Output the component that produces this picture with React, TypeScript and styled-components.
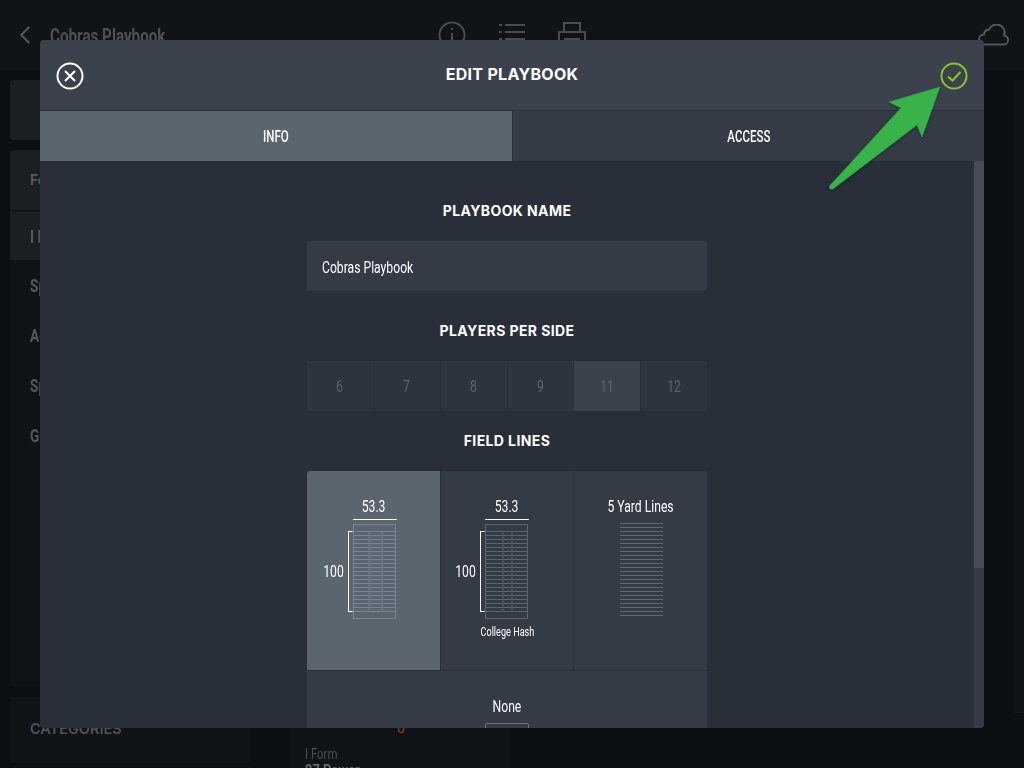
import React from "react";
import styled, { createGlobalStyle } from "styled-components";
import { ChevronLeft } from "lucide-react";

const GlobalStyle = createGlobalStyle`
    html, body {
        margin: 0;
        padding: 0;
        background: #0c0f12;
        overflow: hidden;
    }
    body {
        font-family: "Roboto", "Liberation Sans", sans-serif;
    }
`;

const playerCounts = [6, 7, 8, 9, 11, 12];
const sideRows = ["Spread", "Ace", "Split", "Gun"];

const FieldDiagram: React.FC<{ hashLeft: number; hashRight: number; stroke: string }> = ({ hashLeft, hashRight, stroke }) => {
    const lines = Array.from({ length: 21 }, (_, i) => 7 + i * 4);
    return (
        <svg width="44" height="96" viewBox="0 0 44 96">
            <rect x="0.5" y="0.5" width="42" height="94" fill="none" stroke={stroke} />
            {lines.map((y) => (
                <line key={y} x1="0" x2="43" y1={y + 0.5} y2={y + 0.5} stroke={stroke} />
            ))}
            {lines.slice(0, 20).map((y) => (
                <g key={y}>
                    <line x1={hashLeft} x2={hashLeft + 2} y1={y + 2.5} y2={y + 2.5} stroke={stroke} />
                    <line x1={hashRight} x2={hashRight + 2} y1={y + 2.5} y2={y + 2.5} stroke={stroke} />
                </g>
            ))}
        </svg>
    );
};

const FieldCell: React.FC<{ active?: boolean; college?: boolean }> = ({ active, college }) => (
    <FieldOption $active={active}>
        <WidthLabel><Squeeze>53.3</Squeeze></WidthLabel>
        <WidthRule $shift={active} />
        <Diagram $shift={active}>
            <LengthLabel><Squeeze>100</Squeeze></LengthLabel>
            <Bracket />
            <FieldDiagram
                hashLeft={college ? 17 : 15}
                hashRight={college ? 26 : 28}
                stroke={active ? "#7b8490" : "#5d646e"}
            />
        </Diagram>
        {college && <Caption><Squeeze>College Hash</Squeeze></Caption>}
    </FieldOption>
);

export default function App() {
    return (
        <Page>
            <GlobalStyle />
            <TopBar>
                <BackButton><ChevronLeft size={30} strokeWidth={1.6} /></BackButton>
                <PageTitle><Squeeze $left>Cobras Playbook</Squeeze></PageTitle>
                <TopIcons>
                    <svg width="28" height="28" viewBox="0 0 28 28" fill="none" stroke="#4a4c4e" strokeWidth="2">
                        <circle cx="14" cy="14" r="12.500" />
                        <path d="M14 12v9M14 7v2" />
                    </svg>
                    <svg width="28" height="28" viewBox="0 0 28 28" fill="none" stroke="#4a4c4e" strokeWidth="2">
                        <path d="M1 4h3M7 4h20M1 11h3M7 11h20M1 18h3M7 18h20" />
                    </svg>
                    <svg width="28" height="28" viewBox="0 0 28 28" fill="none" stroke="#4a4c4e" strokeWidth="2">
                        <path d="M6 11V2h16v9M1 26V11h26v15zM6 18h16" />
                    </svg>
                </TopIcons>
                <svg width="32" height="22" viewBox="0 0 32 22" fill="none" stroke="#55575a" strokeWidth="2">
                    <path d="M7 20.500h19a4.500 4.500 0 0 0 1-9 8 8 0 0 0-15-6 5.500 5.500 0 0 0-5 5 5 5 0 0 0 0 10z" />
                </svg>
            </TopBar>
            <Body>
                <Sidebar>
                    <SearchCard />
                    <FormationCard>
                        <FormationHead>Formations</FormationHead>
                        <FormationRow $active><Squeeze $left>I Form</Squeeze></FormationRow>
                        {sideRows.map((row) => (
                            <FormationRow key={row}><Squeeze $left>{row}</Squeeze></FormationRow>
                        ))}
                    </FormationCard>
                    <CategoriesCard>CATEGORIES</CategoriesCard>
                </Sidebar>
                <PlayColumn>
                    <PlayCard>
                        <PlayCount>0</PlayCount>
                        <PlayForm><Squeeze $left>I Form</Squeeze></PlayForm>
                        <PlayName><Squeeze $left>27 Power</Squeeze></PlayName>
                    </PlayCard>
                </PlayColumn>
                <RightRail />
            </Body>

            <Modal>
                <ModalHeader>
                    <svg width="28" height="28" viewBox="0 0 28 28" fill="none" stroke="#fff">
                        <circle cx="14" cy="14" r="12.500" strokeWidth="2" />
                        <path d="M9 9l10 10M19 9L9 19" strokeWidth="2" />
                    </svg>
                    <ModalTitle>EDIT PLAYBOOK</ModalTitle>
                    <svg width="28" height="28" viewBox="0 0 28 28" fill="none" stroke="#84c828">
                        <circle cx="14" cy="14" r="12.500" strokeWidth="2" />
                        <path d="M8 14.500l4.500 4 8-8.500" strokeWidth="2" />
                    </svg>
                </ModalHeader>
                <Tabs>
                    <Tab $active><Squeeze $x={0.72}>INFO</Squeeze></Tab>
                    <Tab><Squeeze $x={0.72}>ACCESS</Squeeze></Tab>
                </Tabs>
                <ModalBody>
                    <Form>
                        <SectionTitle>PLAYBOOK NAME</SectionTitle>
                        <NameField><Squeeze $left>Cobras Playbook</Squeeze></NameField>
                        <SectionTitle>PLAYERS PER SIDE</SectionTitle>
                        <Players>
                            {playerCounts.map((n) => (
                                <Player key={n} $active={n === 11}><Squeeze>{n}</Squeeze></Player>
                            ))}
                        </Players>
                        <SectionTitle>FIELD LINES</SectionTitle>
                        <FieldGrid>
                            <FieldCell active />
                            <FieldCell college />
                            <FieldOption>
                                <YardLabel><Squeeze>5 Yard Lines</Squeeze></YardLabel>
                                <svg width="44" height="96" viewBox="0 0 44 96" stroke="#636a74">
                                    {Array.from({ length: 24 }, (_, i) => (
                                        <line key={i} x1="1" x2="44" y1={2.5 + i * 4} y2={2.5 + i * 4} />
                                    ))}
                                </svg>
                            </FieldOption>
                            <NoneOption>
                                <YardLabel><Squeeze>None</Squeeze></YardLabel>
                                <NoneField />
                            </NoneOption>
                        </FieldGrid>
                    </Form>
                    <ScrollTrack><ScrollThumb /></ScrollTrack>
                </ModalBody>
            </Modal>

            <Arrow width="124" height="112" viewBox="0 0 124 112">
                <path d="M111 0L60 15 72 21 0.500 99Q0 103 4 102L88 38 93 50z" fill="#37b34a" stroke="#37b34a" strokeWidth="0.500" strokeLinejoin="round" />
            </Arrow>
        </Page>
    );
}

const Page = styled.div`
    position: relative;
    width: 1024px;
    height: 768px;
    overflow: hidden;
    background: #0c0f12;
    color: #55575a;
`;

const Squeeze = styled.span<{ $left?: boolean; $x?: number }>`
    display: inline-block;
    white-space: nowrap;
    transform: scaleX(${(p) => p.$x ?? 0.76});
    transform-origin: ${(p) => (p.$left ? "left center" : "center")};
`;

const TopBar = styled.header`
    height: 70px;
    padding: 0 15px 0 10px;
    display: flex;
    align-items: center;
    box-sizing: border-box;
    background: #101417;
    color: #55575a;
`;

const BackButton = styled.div`
    display: flex;
    width: 30px;
    margin-right: 10px;
`;

const PageTitle = styled.div`
    width: 380px;
    padding-top: 2px;
    font-size: 20px;
    font-weight: 700;
    color: #4e5052;
`;

const TopIcons = styled.div`
    display: flex;
    gap: 32px;
    margin: 0 0 0 8px;
    flex: 1;
`;

const Body = styled.div`
    display: flex;
    padding: 10px 0 0 10px;
    gap: 40px;
`;

const Sidebar = styled.aside`
    width: 240px;
    height: 683px;
    flex: none;
    display: flex;
    flex-direction: column;
    gap: 10px;
`;

const SearchCard = styled.div`
    height: 60px;
    background: #1b1f22;
    border-radius: 4px;
`;

const FormationCard = styled.div`
    flex: 1;
    background: #0f1316;
    border-radius: 4px;
    overflow: hidden;
`;

const FormationHead = styled.div`
    height: 60px;
    line-height: 60px;
    padding-left: 20px;
    background: #1b1f22;
    font-family: "Inter", sans-serif;
    font-weight: 700;
    font-size: 14px;
    border-bottom: 1px solid #0c0e10;
    color: #55575a;
`;

const FormationRow = styled.div<{ $active?: boolean }>`
    height: ${(p) => (p.$active ? "49px" : "50px")};
    line-height: 52px;
    padding-left: 20px;
    font-size: 18px;
    font-weight: 700;
    color: #55575a;
    background: ${(p) => (p.$active ? "#1b1f22" : "transparent")};
`;

const CategoriesCard = styled.div`
    height: 66px;
    flex: none;
    line-height: 64px;
    padding-left: 20px;
    background: #101417;
    font-family: "Inter", sans-serif;
    font-weight: 600;
    font-size: 14.500px;
    color: #505254;
`;

const PlayColumn = styled.main`
    flex: 1;
`;

const PlayCard = styled.div`
    width: 220px;
    height: 70px;
    margin-top: 640px;
    padding-left: 15px;
    box-sizing: border-box;
    background: #101417;
`;

const PlayCount = styled.div`
    padding-right: 13px;
    color: #8a4518;
    font-size: 14px;
    text-align: center;
    height: 27px;
`;

const PlayForm = styled.div`
    font-size: 15px;
    line-height: 15px;
    color: #4a4c4e;
`;

const PlayName = styled.div`
    font-size: 17px;
    line-height: 17px;
    font-weight: 700;
    color: #66686a;
`;

const RightRail = styled.div`
    width: 10px;
    height: 633px;
    flex: none;
    background: #101417;
`;

const Modal = styled.div`
    position: absolute;
    left: 40px;
    top: 40px;
    width: 944px;
    height: 688px;
    display: flex;
    flex-direction: column;
    background: #282f38;
    border-radius: 4px;
    overflow: hidden;
`;

const ModalHeader = styled.div`
    height: 71px;
    flex: none;
    padding: 2px 16px 0 16px;
    box-sizing: border-box;
    display: flex;
    align-items: center;
    justify-content: space-between;
    background: #3b424d;
    border-bottom: 1px solid #2a3038;
`;

const ModalTitle = styled.div`
    margin-bottom: 5px;
    color: #fff;
    font-family: "Inter", sans-serif;
    font-size: 16px;
    letter-spacing: 0.3px;
    font-weight: 700;
`;

const Tabs = styled.div`
    display: grid;
    grid-template-columns: 472px 1fr;
    gap: 1px;
    height: 50px;
    flex: none;
    background: #2a3038;
`;

const Tab = styled.div<{ $active?: boolean }>`
    display: flex;
    align-items: center;
    justify-content: center;
    font-size: 16px;
    font-weight: 500;
    color: #fff;
    background: ${(p) => (p.$active ? "#5a6570" : "#343b46")};
`;

const ModalBody = styled.div`
    flex: 1;
    display: flex;
    min-height: 0;
`;

const Form = styled.div`
    flex: 1;
    display: flex;
    flex-direction: column;
    align-items: center;
    padding: 40px 0 0 0;
    overflow: hidden;
`;

const SectionTitle = styled.h2`
    margin: 0;
    height: 20px;
    flex: none;
    line-height: 20px;
    color: #fff;
    font-family: "Inter", sans-serif;
    font-size: 14px;
    letter-spacing: 0.4px;
    font-weight: 700;
`;

const NameField = styled.div`
    width: 400px;
    height: 50px;
    flex: none;
    margin: 20px 0 30px;
    padding-left: 15px;
    box-sizing: border-box;
    line-height: 53px;
    font-size: 16px;
    color: #fff;
    background: #343b46;
    border-radius: 3px;
`;

const Players = styled.div`
    width: 400px;
    height: 50px;
    flex: none;
    margin: 20px 0;
    display: grid;
    grid-template-columns: repeat(6, 1fr);
    gap: 1px;
`;

const Player = styled.div<{ $active?: boolean }>`
    display: flex;
    align-items: center;
    justify-content: center;
    font-size: 16px;
    color: #5e646d;
    background: ${(p) => (p.$active ? "#3b424d" : "#2d343d")};
`;

const FieldGrid = styled.div`
    width: 400px;
    margin-top: 20px;
    display: grid;
    grid-template-columns: repeat(3, 1fr);
    gap: 1px;
    border-radius: 3px;
    overflow: hidden;
    background: #282f38;
    flex: none;
`;

const FieldOption = styled.div<{ $active?: boolean }>`
    height: 199px;
    padding-top: 27px;
    box-sizing: border-box;
    display: flex;
    flex-direction: column;
    align-items: center;
    background: ${(p) => (p.$active ? "#5a6570" : "#343b46")};
`;

const WidthLabel = styled.div`
    font-size: 16px;
    color: #fff;
    line-height: 18px;
`;

const WidthRule = styled.div<{ $shift?: boolean }>`
    width: 44px;
    height: 1px;
    margin-top: 3px;
    margin-left: ${(p) => (p.$shift ? "4px" : "0")};
    background: #fff;
`;

const Diagram = styled.div<{ $shift?: boolean }>`
    position: relative;
    margin-top: 4px;
    margin-left: ${(p) => (p.$shift ? "4px" : "0")};
    display: flex;
`;

const LengthLabel = styled.div`
    position: absolute;
    left: -33px;
    top: 38px;
    font-size: 16px;
    color: #fff;
`;

const Bracket = styled.div`
    position: absolute;
    left: -5px;
    top: 7px;
    width: 5px;
    height: 81px;
    border: 1px solid #fff;
    border-right: none;
    box-sizing: border-box;
`;

const Caption = styled.div`
    margin-top: 5px;
    font-size: 12px;
    color: #fff;
`;

const YardLabel = styled.div`
    font-size: 16px;
    color: #fff;
    line-height: 18px;
    margin-bottom: 5px;
`;

const NoneOption = styled(FieldOption)`
    grid-column: 1 / -1;
`;

const NoneField = styled.div`
    width: 44px;
    height: 96px;
    margin-top: 2px;
    border: 1px solid #6d747d;
    border-radius: 2px;
    box-sizing: border-box;
    flex: none;
`;

const ScrollTrack = styled.div`
    width: 10px;
    flex: none;
    background: #343b46;
`;

const ScrollThumb = styled.div`
    height: 407px;
    background: #464d58;
`;

const Arrow = styled.svg`
    position: absolute;
    left: 829px;
    top: 87px;
    filter: drop-shadow(0 1px 1px rgba(0, 0, 0, 0.35));
`;
